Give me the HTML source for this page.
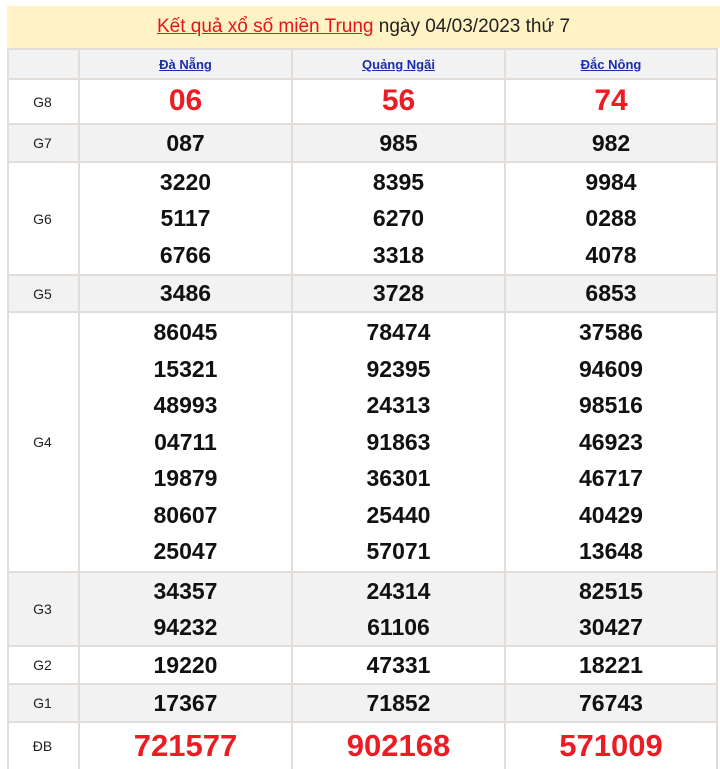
<!DOCTYPE html>
<html><head><meta charset="utf-8"><style>
body{margin:0;background:#fff;width:720px;height:769px;position:relative;overflow:hidden;font-family:"Liberation Sans",Arial,sans-serif}
.band{position:absolute;left:7px;top:6px;width:713px;height:42px;background:#fff2c4;text-align:center;line-height:42px;font-size:19px;color:#222}
.band a{color:#e8141c;text-decoration:underline}
.r{position:absolute;left:7px;width:710px;border-top:2px solid #e2ddd8;box-sizing:border-box}
.g{background:#f2f2f2}
.c{position:absolute;top:0;bottom:0;text-align:center;display:flex;flex-direction:column;justify-content:center;align-items:center}
.l{left:0;width:71px;font-size:14px;color:#222}
.c1{left:72px;width:213px}.c2{left:285px;width:213px}.c3{left:498px;width:212px}
.n{font-size:23px;font-weight:bold;color:#111;line-height:36.5px}
.red{color:#ec1c24;font-size:30px}
.db{color:#ec1c24;font-size:31px}
.h a{color:#1a2dab;font-size:13px;font-weight:bold;text-decoration:underline}
.v{position:absolute;top:48px;height:721px;width:2px;background:#e2ddd8}
</style></head><body>
<div class="band"><a>Kết quả xổ số miền Trung</a> ngày 04/03/2023 thứ 7</div>
<div class="r g h" style="top:48px;height:30px"><div class="c l"></div><div class="c c1"><a>Đà Nẵng</a></div><div class="c c2"><a>Quảng Ngãi</a></div><div class="c c3"><a>Đắc Nông</a></div></div>
<div class="r" style="top:78px;height:45px"><div class="c l">G8</div><div class="c c1 n red">06</div><div class="c c2 n red">56</div><div class="c c3 n red">74</div></div>
<div class="r g" style="top:123px;height:38px"><div class="c l">G7</div><div class="c c1 n">087</div><div class="c c2 n">985</div><div class="c c3 n">982</div></div>
<div class="r" style="top:161px;height:113px"><div class="c l">G6</div><div class="c c1 n">3220<br>5117<br>6766</div><div class="c c2 n">8395<br>6270<br>3318</div><div class="c c3 n">9984<br>0288<br>4078</div></div>
<div class="r g" style="top:274px;height:37px"><div class="c l">G5</div><div class="c c1 n">3486</div><div class="c c2 n">3728</div><div class="c c3 n">6853</div></div>
<div class="r" style="top:311px;height:260px"><div class="c l">G4</div><div class="c c1 n">86045<br>15321<br>48993<br>04711<br>19879<br>80607<br>25047</div><div class="c c2 n">78474<br>92395<br>24313<br>91863<br>36301<br>25440<br>57071</div><div class="c c3 n">37586<br>94609<br>98516<br>46923<br>46717<br>40429<br>13648</div></div>
<div class="r g" style="top:571px;height:74px"><div class="c l">G3</div><div class="c c1 n">34357<br>94232</div><div class="c c2 n">24314<br>61106</div><div class="c c3 n">82515<br>30427</div></div>
<div class="r" style="top:645px;height:38px"><div class="c l">G2</div><div class="c c1 n">19220</div><div class="c c2 n">47331</div><div class="c c3 n">18221</div></div>
<div class="r g" style="top:683px;height:38px"><div class="c l">G1</div><div class="c c1 n">17367</div><div class="c c2 n">71852</div><div class="c c3 n">76743</div></div>
<div class="r" style="top:721px;height:48px"><div class="c l">ĐB</div><div class="c c1 n db">721577</div><div class="c c2 n db">902168</div><div class="c c3 n db">571009</div></div>
<div class="v" style="left:7px"></div><div class="v" style="left:78px"></div><div class="v" style="left:291px"></div><div class="v" style="left:504px"></div><div class="v" style="left:716px"></div>
</body></html>
